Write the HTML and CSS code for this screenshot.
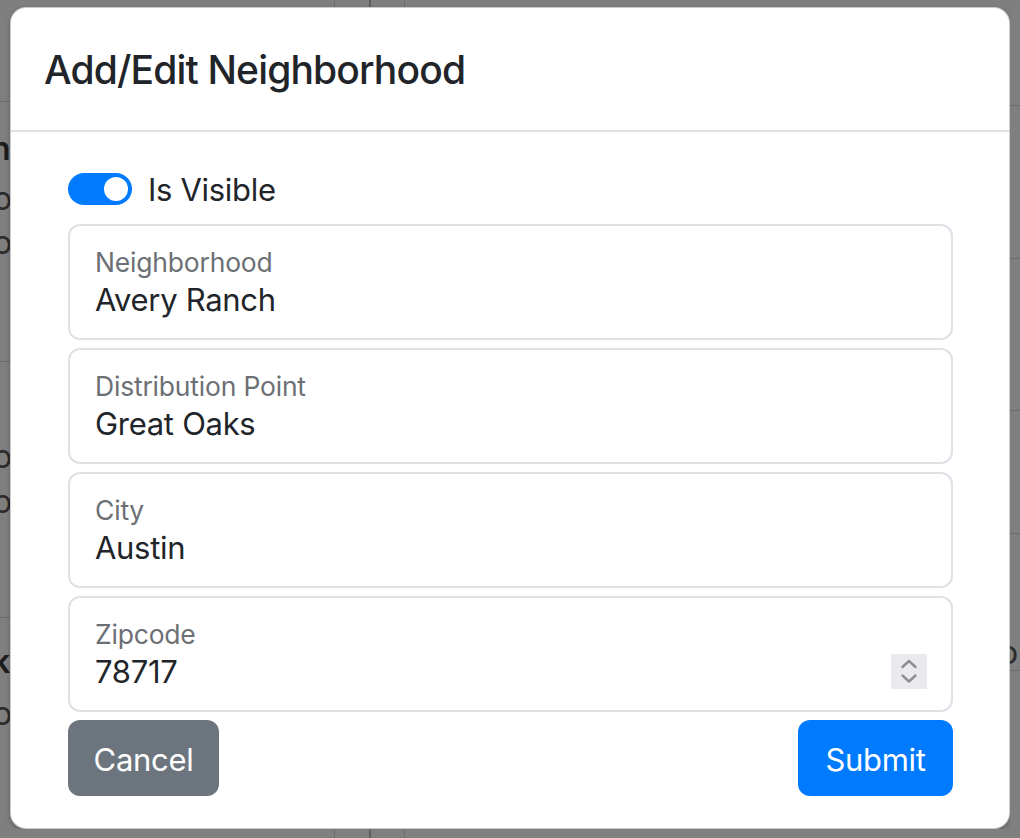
FILE: index.html
```html
<!DOCTYPE html>
<html lang="en">
<head>
<meta charset="utf-8">
<title>Add/Edit Neighborhood</title>
<link rel="stylesheet" href="styles.css">
</head>
<body>
<div class="page">
  <div class="strip strip-top">
    <span class="vline vline-a"></span>
    <span class="vline vline-b"></span>
    <span class="vline vline-c"></span>
  </div>

  <div class="strip strip-left">
    <div class="seg seg-l1"></div>
    <div class="seg seg-l2">
      <div class="bg-text bold shift-nc">nc</div>
      <div class="bg-text shift-o">o</div>
      <div class="bg-text shift-o">o</div>
    </div>
    <div class="seg seg-l3">
      <div class="bg-text shift-o">o</div>
      <div class="bg-text shift-o">o</div>
    </div>
    <div class="seg seg-l4">
      <div class="bg-text bold shift-k">k</div>
      <div class="bg-text shift-o">o</div>
    </div>
  </div>

  <div class="modal">
    <div class="modal-header">
      <h5 class="modal-title">Add/Edit Neighborhood</h5>
    </div>
    <div class="modal-body">
      <div class="form-check">
        <span class="switch"><span class="knob"></span></span>
        <span class="check-label">Is Visible</span>
      </div>
      <div class="fields">
        <div class="field">
          <div class="field-label">Neighborhood</div>
          <div class="field-value">Avery Ranch</div>
        </div>
        <div class="field">
          <div class="field-label">Distribution Point</div>
          <div class="field-value">Great Oaks</div>
        </div>
        <div class="field">
          <div class="field-label">City</div>
          <div class="field-value">Austin</div>
        </div>
        <div class="field">
          <div class="field-label">Zipcode</div>
          <div class="field-value value-row">
            <span>78717</span>
            <span class="spinner">
              <svg width="36" height="35" viewBox="0 0 36 35">
                <polyline points="11.5,13 18,7 24.5,13" fill="none" stroke="#8d8d96" stroke-width="2.4" stroke-linecap="round" stroke-linejoin="round"/>
                <polyline points="11.5,21.5 18,27.5 24.5,21.5" fill="none" stroke="#8d8d96" stroke-width="2.4" stroke-linecap="round" stroke-linejoin="round"/>
              </svg>
            </span>
          </div>
        </div>
      </div>
      <div class="actions">
        <button class="btn btn-secondary" type="button">Cancel</button>
        <button class="btn btn-primary" type="button">Submit</button>
      </div>
    </div>
  </div>

  <div class="strip strip-right">
    <div class="seg seg-r1"></div>
    <div class="seg seg-r2"></div>
    <div class="seg seg-r3"></div>
    <div class="seg seg-r4"></div>
    <div class="seg seg-r5">
      <div class="bg-text shift-ro">o</div>
    </div>
    <div class="seg seg-r6"></div>
  </div>

  <div class="strip strip-bottom">
    <span class="vline vline-a"></span>
    <span class="vline vline-b"></span>
    <span class="vline vline-c"></span>
  </div>
</div>
</body>
</html>
```

FILE: styles.css
```css
* {
  box-sizing: border-box;
  margin: 0;
  padding: 0;
}

html,
body {
  width: 1020px;
  height: 838px;
  overflow: hidden;
}

body {
  background: #7f7f7f;
  font-family: Inter, "Liberation Sans", "DejaVu Sans", sans-serif;
  color: #212529;
}

.page {
  display: grid;
  grid-template-columns: 10px 1000px 10px;
  grid-template-rows: 7px 822px 9px;
  width: 1020px;
  height: 838px;
}

/* ---------- backdrop strips ---------- */
.strip {
  overflow: hidden;
  background: #7f7f7f;
}

.strip-top {
  grid-column: 2;
  grid-row: 1;
  display: flex;
  padding-left: 324px;
}

.strip-bottom {
  grid-column: 2;
  grid-row: 3;
  display: flex;
  padding-left: 324px;
}

.vline {
  display: block;
  width: 1px;
  height: 100%;
  background: #6d6d6d;
}

.vline-b {
  width: 2px;
  margin-left: 34px;
  background: #5e5e5e;
}

.vline-c {
  margin-left: 33px;
}

.strip-left {
  grid-column: 1;
  grid-row: 1 / 4;
  display: flex;
  flex-direction: column;
}

.strip-right {
  grid-column: 3;
  grid-row: 1 / 4;
  display: flex;
  flex-direction: column;
}

.seg {
  flex: none;
  border-bottom: 1px solid #6b6b6b;
}

.seg-l1 { height: 102px; }
.seg-l2 { height: 260px; padding-top: 27px; }
.seg-l3 { height: 256px; padding-top: 73px; }
.seg-l4 { flex: 1; border-bottom: 0; padding-top: 22px; }

.seg-r1 { height: 106px; }
.seg-r2 { height: 153px; }
.seg-r3 { height: 152px; }
.seg-r4 { height: 123px; }
.seg-r5 { height: 137px; padding-top: 97px; }
.seg-r6 { flex: 1; border-bottom: 0; }

.bg-text {
  font-size: 32px;
  line-height: 44px;
  height: 44px;
  color: #2b2b2b;
  white-space: nowrap;
}

.bg-text.bold {
  font-weight: 600;
  color: #1d1d1d;
}

.shift-nc { margin-left: -9px; line-height: 40px; height: 48px; }
.shift-o { margin-left: -7px; }
.shift-k { margin-left: -8px; height: 52px; }
.shift-ro { margin-left: -11px; }

.seg-l3 .shift-o + .shift-o { margin-top: 1px; }

/* ---------- modal ---------- */
.modal {
  grid-column: 2;
  grid-row: 2;
  display: flex;
  flex-direction: column;
  background: #fff;
  border: 1px solid rgba(0, 0, 0, 0.2);
  border-radius: 16px;
  box-shadow: 0 2px 5px rgba(0, 0, 0, 0.25);
}

.modal-header {
  padding: 33px 33px 31px;
  border-bottom: 2px solid #dee2e6;
}

.modal-title {
  font-size: 39px;
  font-weight: 500;
  line-height: 58px;
  letter-spacing: -0.85px;
  color: #212529;
}

.modal-body {
  padding: 32px 56px 32px 57px;
  display: flex;
  flex-direction: column;
}

.form-check {
  display: flex;
  align-items: center;
  height: 48px;
  margin-bottom: 12px;
}

.switch {
  display: flex;
  align-items: center;
  justify-content: flex-end;
  width: 64px;
  height: 32px;
  border-radius: 16px;
  background: #007bff;
  padding-right: 4px;
  margin-top: 2px;
}

.knob {
  display: block;
  width: 24px;
  height: 24px;
  border-radius: 50%;
  background: #fff;
}

.check-label {
  margin-left: 16px;
  padding-top: 4px;
  font-size: 31px;
  letter-spacing: -0.3px;
  line-height: 48px;
  color: #212529;
}

.fields {
  display: flex;
  flex-direction: column;
  gap: 8px;
}

.field {
  height: 116px;
  border: 2px solid #dee2e6;
  border-radius: 12px;
  padding: 20px 24px 0 25px;
}

.field-label {
  font-size: 26.5px;
  line-height: 32px;
  letter-spacing: -0.2px;
  color: #6c7075;
}

.field-value {
  margin-top: 2px;
  font-size: 31px;
  line-height: 40px;
  letter-spacing: -0.3px;
  color: #212529;
}

.value-row {
  display: flex;
  align-items: center;
  justify-content: space-between;
}

.spinner {
  display: block;
  width: 36px;
  height: 35px;
  background: #e9e9ee;
  margin-top: -2px;
}

.spinner svg {
  display: block;
}

.actions {
  display: flex;
  justify-content: space-between;
  margin-top: 8px;
}

.btn {
  height: 76px;
  border: 0;
  border-radius: 12px;
  padding: 4px 24px 0;
  font-family: inherit;
  font-size: 31px;
  letter-spacing: -0.3px;
  color: #fff;
  line-height: 72px;
}

.btn-secondary {
  width: 151px;
  background: #6c757d;
}

.btn-primary {
  width: 155px;
  background: #007bff;
}
```
